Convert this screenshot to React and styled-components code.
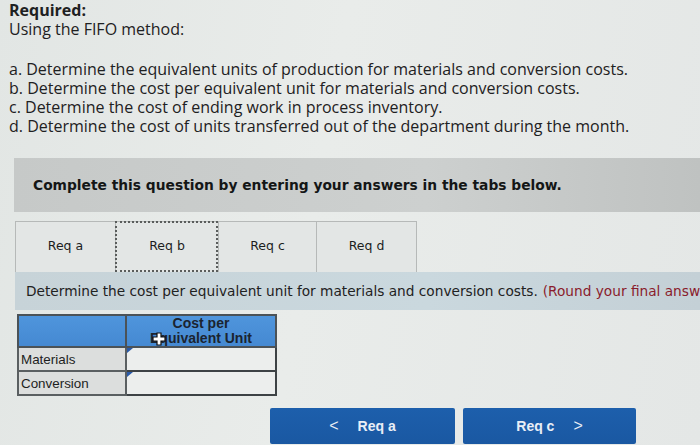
import React from 'react'
import styled, { createGlobalStyle } from 'styled-components'

const GlobalStyle = createGlobalStyle`
  html, body {
    margin: 0;
    padding: 0;
    width: 700px;
    height: 445px;
    overflow: hidden;
    background: #e4e8e6;
  }
`

const Page = styled.div`
  width: 700px;
  height: 445px;
  overflow: hidden;
  background: linear-gradient(100deg, #e2e6e4 0%, #e9ecea 45%, #e4e7e6 100%);
  white-space: nowrap;
`

const Intro = styled.div`
  padding: 1px 0 0 9px;
  font-family: 'Open Sans', sans-serif;
  font-size: 16px;
  line-height: 19px;
  color: #1e2122;
`

const Heading = styled.div`
  font-weight: 700;
`

const Steps = styled.ol`
  list-style: none;
  margin: 21px 0 0;
  padding: 0;
`

const Band = styled.div`
  margin: 22px 0 0 14px;
  height: 54px;
  display: flex;
  align-items: center;
  padding-left: 19px;
  background: linear-gradient(90deg, #c6c9c8 0%, #cdd0cf 60%, #bfc2c1 100%);
  font-family: 'DejaVu Sans', Verdana, sans-serif;
  font-weight: 700;
  font-size: 13.8px;
  color: #141616;
`

const TabRow = styled.div`
  margin-left: 15px;
  padding-top: 9px;
  display: flex;
`

const Tab = styled.button`
  width: ${(p) => p.w}px;
  height: 51px;
  box-sizing: border-box;
  background: #e3e6e5;
  border: 1px solid #b6b9b8;
  border-bottom: none;
  border-right: ${(p) => (p.last ? '1px solid #b6b9b8' : 'none')};
  outline: ${(p) => (p.focused ? '2px dotted #5a5d5c' : 'none')};
  outline-offset: -2px;
  font-family: 'DejaVu Sans', Verdana, sans-serif;
  font-size: 12.5px;
  color: #1c1e1e;
  padding: 0 0 4px;
`

const Panel = styled.div`
  margin-left: 15px;
  height: 38px;
  display: flex;
  align-items: center;
  padding-left: 11px;
  background: linear-gradient(90deg, #c7d3d8 0%, #cad8de 60%, #c4d0d6 100%);
  font-family: 'DejaVu Sans', Verdana, sans-serif;
  font-size: 13.7px;
  color: #1f2222;
`

const Note = styled.span`
  color: #8a1c2c;
  margin-left: 5px;
`

const Table = styled.table`
  margin: 4px 0 0 17px;
  border-collapse: collapse;
  font-family: 'Liberation Sans', Arial, sans-serif;
  font-size: 13.4px;
  color: #1c1e1e;
`

const HeadCell = styled.th`
  position: relative;
  width: ${(p) => p.w}px;
  height: 30px;
  padding: 0;
  background: linear-gradient(180deg, #4f95dc 0%, #4589d2 100%);
  border: 2px solid #4b5257;
  font-weight: 700;
  font-size: 14px;
  line-height: 15px;
  color: #1b2430;
`

const LabelCell = styled.td`
  height: 22px;
  padding: 0 0 0 2px;
  background: #dcdedd;
  border: 2px solid #5a5f61;
`

const InputCell = styled.td`
  position: relative;
  padding: 0;
  background: #eceeed;
  border: 2px solid #3d4245;
  &::before {
    content: '';
    position: absolute;
    left: 0;
    top: 0;
    border-top: 5px solid #2a5aa8;
    border-right: 6px solid transparent;
  }
`

const Cursor = styled.svg`
  position: absolute;
  left: 25px;
  top: 16px;
`

const Nav = styled.div`
  margin: 12px 0 0 270px;
  display: flex;
  gap: 8px;
`

const NavButton = styled.button`
  width: ${(p) => p.w}px;
  height: 36px;
  border: none;
  border-radius: 2px;
  background: linear-gradient(180deg, #1d5fac 0%, #1a58a2 100%);
  color: #e9eef6;
  font-family: 'Liberation Sans', Arial, sans-serif;
  font-weight: 700;
  font-size: 14px;
  display: flex;
  align-items: center;
  justify-content: center;
  gap: 19px;
  padding: 0;
`

const Chevron = styled.span`
  font-weight: 400;
  font-size: 16px;
`

export default function App() {
  return (
    <Page>
      <GlobalStyle />
      <Intro>
        <Heading>Required:</Heading>
        <div>Using the FIFO method:</div>
        <Steps>
          <li>a. Determine the equivalent units of production for materials and conversion costs.</li>
          <li>b. Determine the cost per equivalent unit for materials and conversion costs.</li>
          <li>c. Determine the cost of ending work in process inventory.</li>
          <li>d. Determine the cost of units transferred out of the department during the month.</li>
        </Steps>
      </Intro>
      <Band>Complete this question by entering your answers in the tabs below.</Band>
      <TabRow>
        <Tab w={100}>Req a</Tab>
        <Tab w={103} focused>Req b</Tab>
        <Tab w={98}>Req c</Tab>
        <Tab w={101} last>Req d</Tab>
      </TabRow>
      <Panel>
        Determine the cost per equivalent unit for materials and conversion costs.
        <Note>(Round your final answers to 2 decimal places.)</Note>
      </Panel>
      <Table>
        <thead>
          <tr>
            <HeadCell w={106} />
            <HeadCell w={148}>
              Cost per
              <br />
              Equivalent Unit
              <Cursor width="14" height="14" viewBox="0 0 14 14">
                <path
                  d="M5 1h4v4h4v4H9v4H5V9H1V5h4z"
                  fill="#fff"
                  stroke="#111"
                  strokeWidth="1.2"
                />
              </Cursor>
            </HeadCell>
          </tr>
        </thead>
        <tbody>
          <tr>
            <LabelCell>Materials</LabelCell>
            <InputCell />
          </tr>
          <tr>
            <LabelCell>Conversion</LabelCell>
            <InputCell />
          </tr>
        </tbody>
      </Table>
      <Nav>
        <NavButton w={185}>
          <Chevron>&lt;</Chevron>
          Req a
        </NavButton>
        <NavButton w={173}>
          Req c
          <Chevron>&gt;</Chevron>
        </NavButton>
      </Nav>
    </Page>
  )
}
